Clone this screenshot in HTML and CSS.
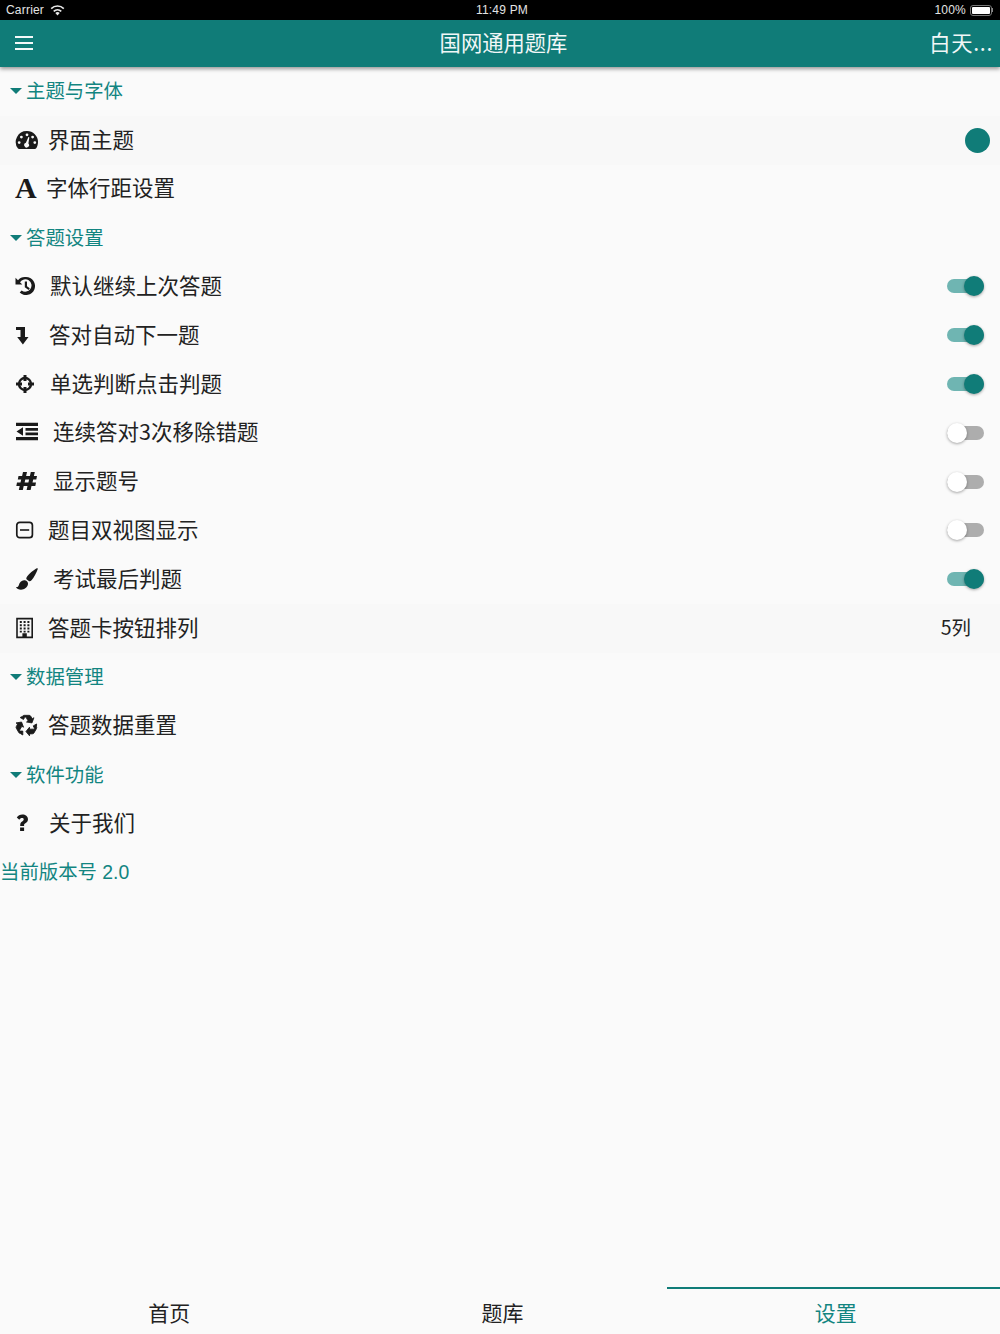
FILE: index.html
```html
<!DOCTYPE html>
<html lang="zh">
<head>
<meta charset="utf-8">
<title>国网通用题库</title>
<link rel="stylesheet" href="styles.css">
</head>
<body>
<div class="app">
  <div class="statusbar">
    <div class="st-left"><span>Carrier</span>
      <svg class="wifi" width="15" height="11" viewBox="0 0 15 11"><path d="M7.500 10.600 5.300 8a3.200 3.200 0 0 1 4.400 0z" fill="#e8e8e8"/><path d="M3.700 6.300a5.600 5.600 0 0 1 7.600 0M1.200 3.600a9 9 0 0 1 12.600 0" fill="none" stroke="#e8e8e8" stroke-width="1.600"/></svg>
    </div>
    <div class="st-time">11:49 PM</div>
    <div class="st-right"><span>100%</span><span class="battery"><span class="battery-fill"></span></span><span class="battery-tip"></span></div>
  </div>
  <header class="navbar">
    <div class="menu"><span></span><span></span><span></span></div>
    <div class="nav-title">国网通用题库</div>
    <div class="nav-right">白天...</div>
  </header>
  <main class="content">
    <div class="row section"><span class="caret"></span><span class="sec-label">主题与字体</span></div>
    <div class="row tinted">
      <span class="ico"><svg width="24" height="20" viewBox="0 0 24 20"><path fill-rule="evenodd" d="M12 1a11 11 0 0 1 11 11c0 2.500-.7 4.800-2 6.600-.3.400-.7.400-1 .400H4c-.4 0-.8 0-1-.4A11 11 0 0 1 12 1zM12 3.400a1.400 1.400 0 1 0 0 2.800 1.400 1.400 0 0 0 0-2.800zM6.400 5.700a1.400 1.400 0 1 0 0 2.800 1.400 1.400 0 0 0 0-2.800zM17.600 5.700a1.400 1.400 0 1 0 0 2.800 1.400 1.400 0 0 0 0-2.800zM4.200 11.200a1.400 1.400 0 1 0 0 2.800 1.400 1.400 0 0 0 0-2.800zM19.800 11.200a1.400 1.400 0 1 0 0 2.800 1.400 1.400 0 0 0 0-2.800zM13.200 7.500l-2.300 5.300a2.400 2.400 0 1 0 2.500.7l.9-5.700c.1-.9-.7-1.100-1.100-.3z"/></svg></span>
      <span class="label">界面主题</span><span class="dot"></span>
    </div>
    <div class="row">
      <span class="ico ico-a">A</span>
      <span class="label l-47">字体行距设置</span>
    </div>
    <div class="row section"><span class="caret"></span><span class="sec-label">答题设置</span></div>
    <div class="row">
      <span class="ico"><svg width="22" height="20" viewBox="0 0 22 20"><g transform="translate(-1)"><path d="M12 1a9 9 0 1 1-6.300 15.400l1.900-2A6.200 6.200 0 1 0 6 6.200l2.300 2.300H1.500V1.800l2.500 2.400A9 9 0 0 1 12 1z"/><path d="M10.800 5.500h2.200v4.800l2.800 2-1.200 1.700-3.800-2.700z"/></g></svg></span>
      <span class="label l-51">默认继续上次答题</span>
      <span class="switch on"><span class="track"></span><span class="knob"></span></span>
    </div>
    <div class="row">
      <span class="ico"><svg width="22" height="20" viewBox="0 0 22 20"><path d="M1 2h9v10h3.500L7.900 19.500 2.200 12h3.300V5H1z"/></svg></span>
      <span class="label l-50">答对自动下一题</span>
      <span class="switch on"><span class="track"></span><span class="knob"></span></span>
    </div>
    <div class="row">
      <span class="ico"><svg width="22" height="20" viewBox="0 0 22 20"><circle cx="10" cy="10" r="6" fill="none" stroke="#1a1a1a" stroke-width="2.400"/><path d="M8.500 1h3v6h-3zM8.500 13h3v6h-3zM1 8.500h6v3H1zM13 8.500h6v3h-6z"/></svg></span>
      <span class="label l-51">单选判断点击判题</span>
      <span class="switch on"><span class="track"></span><span class="knob"></span></span>
    </div>
    <div class="row">
      <span class="ico"><svg width="24" height="20" viewBox="0 0 24 20"><path d="M1 .8h22V4H1zM10.500 6h12.500v2.800H10.500zM10.500 10.500h12.500v2.800H10.500zM1 15h22v3.200H1zM8 5.200v8.600L1.500 9.500z"/></svg></span>
      <span class="label l-54">连续答对3次移除错题</span>
      <span class="switch"><span class="track"></span><span class="knob"></span></span>
    </div>
    <div class="row">
      <span class="ico"><svg width="24" height="20" viewBox="0 0 24 20"><path fill-rule="evenodd" d="M8 1h4l-.9 4h3.800l.9-4h4l-.9 4H22l-.7 3.500h-3.100l-.7 3H21l-.7 3.500h-3.800l-.9 4h-4l.9-4H8.700l-.9 4h-4l.9-4H1.300L2 11.500h3.500l.7-3H2.800L3.500 5h3.600zM10.300 8.500l-.7 3h3.800l.7-3z"/></svg></span>
      <span class="label l-54">显示题号</span>
      <span class="switch"><span class="track"></span><span class="knob"></span></span>
    </div>
    <div class="row">
      <span class="ico"><svg width="20" height="20" viewBox="0 0 20 20"><rect x="1.800" y="2.300" width="15.600" height="15.400" rx="3" fill="none" stroke="#1a1a1a" stroke-width="1.700"/><path d="M5 9.200h9.200v1.600H5z"/></svg></span>
      <span class="label">题目双视图显示</span>
      <span class="switch"><span class="track"></span><span class="knob"></span></span>
    </div>
    <div class="row">
      <span class="ico"><svg width="24" height="22" viewBox="0 0 24 22"><path d="M21.800.3c.7-.3 1.200.2.900.9-1.200 3.500-3.800 8.300-6.200 11-.8.900-2 1.200-2.700.7l-2-1.500c-.7-.6-.6-1.600 0-2.400C14 6 18.500 2 21.800.3z"/><path d="M9 12.200c1.700-.2 4.300 1.300 4 3.800-.4 3.400-3.600 5.700-7 5.700-2.300 0-4.200-.8-5-2.700 1.300.3 2.300-.3 2.800-1.800.7-2.700 2.600-4.700 5.200-5z"/></svg></span>
      <span class="label l-54">考试最后判题</span>
      <span class="switch on"><span class="track"></span><span class="knob"></span></span>
    </div>
    <div class="row tinted">
      <span class="ico"><svg width="20" height="22" viewBox="0 0 20 22"><path fill-rule="evenodd" d="M1.200 .8h16.800v20.400H1.200zM2.800 2.400v17.200h4.600v-3.300h4.400v3.300h4.600V2.400z"/><path d="M4.800 4h2v2h-2zM8.600 4h2v2h-2zM12.400 4h2v2h-2zM4.800 7.300h2v2h-2zM8.600 7.300h2v2h-2zM12.400 7.300h2v2h-2zM4.800 10.600h2v2h-2zM8.600 10.600h2v2h-2zM12.400 10.600h2v2h-2zM4.800 13.700h2v1.700h-2zM8.600 13.700h2v1.700h-2zM12.400 13.700h2v1.700h-2z"/></svg></span>
      <span class="label">答题卡按钮排列</span><span class="value">5列</span>
    </div>
    <div class="row section"><span class="caret"></span><span class="sec-label">数据管理</span></div>
    <div class="row">
      <span class="ico"><svg width="23" height="23" viewBox="-1 -1 26 26"><path id="rec" stroke="#1a1a1a" stroke-width=".9" d="M7.600 1.500Q8.200.5 9.500.5h5.500q1.200 0 1.800 1l1.700 2.800 1.900-1.100-2.200 5.900-6.200-1 1.900-1.100-2.500-4.300q-.5-.7-1.300 0l-1.500 2.500-3.800-2.200z"/><use href="#rec" transform="rotate(120 12 12)"/><use href="#rec" transform="rotate(240 12 12)"/></svg></span>
      <span class="label">答题数据重置</span>
    </div>
    <div class="row section"><span class="caret"></span><span class="sec-label">软件功能</span></div>
    <div class="row">
      <span class="ico"><svg width="22" height="20" viewBox="0 0 22 20"><path transform="translate(-2.400)" d="M9.800 1.500c3 0 5.600 1.800 5.600 4.800 0 2-1.100 3.100-2.600 4-1 .6-1.300 1-1.300 1.900v.8H7.600v-1.100c0-1.800.9-2.800 2-3.500.9-.6 1.500-1 1.500-1.900 0-.9-.7-1.400-1.700-1.400-1.100 0-2 .6-2.700 1.600L4.200 4.500C5.400 2.700 7.300 1.500 9.800 1.500zM7.500 14.500h4V18h-4z"/></svg></span>
      <span class="label l-50">关于我们</span>
    </div>
    <div class="row version"><span class="version-text">当前版本号 2.0</span></div>
  </main>
  <nav class="tabs">
    <div class="tab">首页</div>
    <div class="tab">题库</div>
    <div class="tab active">设置</div>
  </nav>
</div>
</body>
</html>
```
FILE: styles.css
```css
* { box-sizing: border-box; }
html, body { margin: 0; padding: 0; }
body { font-family: "Noto Sans CJK SC", "Liberation Sans", sans-serif; background: #fafafa; color: #1f1f1f; }
.app { width: 1000px; height: 1334px; display: flex; flex-direction: column; overflow: hidden; background: #fafafa; }

.statusbar { height: 20px; flex: none; background: #000; color: #e4e4e4; font: 12px/20px "Liberation Sans", sans-serif; display: grid; grid-template-columns: 1fr auto 1fr; padding: 0 7px 0 6px; letter-spacing: .2px; }
.st-left { display: flex; align-items: center; gap: 6px; }
.st-time { margin-left: 5px; }
.st-right { display: flex; align-items: center; justify-content: flex-end; gap: 4px; }
.battery { width: 22px; height: 11px; border: 1px solid #777; border-radius: 3px; padding: 1px; display: block; }
.battery-fill { display: block; height: 100%; background: #fff; border-radius: 1px; }
.battery-tip { width: 1px; height: 4px; background: #888; margin-left: -4px; }

.navbar { height: 47px; flex: none; background: #107c78; color: #f1f7f7; display: grid; grid-template-columns: 1fr auto 1fr; align-items: center; padding: 0 7px 0 15px; position: relative; box-shadow: 0 2px 4px rgba(0,0,0,.4); z-index: 2; font-size: 21.300px; }
.menu { justify-self: start; display: flex; flex-direction: column; gap: 4px; margin-top: -2px; }
.menu span { display: block; width: 18px; height: 2px; background: #f4f9f9; }
.nav-title { line-height: 43px; padding-bottom: 4px; margin-left: -1px; }
.nav-right { justify-self: end; line-height: 43px; padding-bottom: 4px; letter-spacing: .7px; }

.content { flex: 1; }
.row { height: 48.800px; display: flex; align-items: center; font-size: 21.500px; color: #222; }
.tinted { background: #f8f8f8; }
.section { padding-left: 10px; }
.caret { width: 0; height: 0; border-left: 6px solid transparent; border-right: 6px solid transparent; border-top: 6.500px solid #107c78; margin-right: 4px; }
.sec-label { font-size: 19.400px; color: #128581; padding-bottom: 3px; }
.ico { flex: none; width: 33px; margin-left: 15px; display: flex; align-items: center; fill: #1a1a1a; }
.ico svg { display: block; margin-top: -1px; }
.ico-a { font: bold 30px/1 "Liberation Serif", serif; color: #1a1a1a; padding-bottom: 1px; }
.label { white-space: nowrap; padding-bottom: 4px; }
.l-47 { margin-left: -2px; }
.l-50 { margin-left: 1px; }
.l-51 { margin-left: 2px; }
.l-54 { margin-left: 5px; }
.dot { margin-left: auto; margin-right: 10px; width: 25px; height: 25px; border-radius: 50%; background: #107c78; }
.value { margin-left: auto; margin-right: 29px; font-size: 19.400px; padding-bottom: 3px; }

.switch { margin-left: auto; margin-right: 16px; width: 37px; height: 20px; position: relative; margin-top: -.4px; }
.track { position: absolute; left: 0; right: 0; top: 3px; height: 14px; border-radius: 7px; background: #adadad; }
.knob { position: absolute; left: 0; top: 0; width: 20px; height: 20px; border-radius: 50%; background: #fff; box-shadow: 0 1px 3px rgba(0,0,0,.35); }
.switch.on .track { background: #6fb5b2; }
.switch.on .knob { left: 17px; background: #107c78; }

.version { color: #128581; font-family: "Liberation Sans", "Noto Sans CJK SC", sans-serif; font-size: 19.400px; }
.version-text { padding-bottom: 3px; }

.tabs { height: 47px; flex: none; display: grid; grid-template-columns: repeat(3, 1fr); }
.tab { text-align: center; font-size: 21px; line-height: 47px; padding-left: 5px; color: #222; border-top: 2px solid transparent; }
.tab.active { color: #128581; border-top-color: #107c78; }
```
